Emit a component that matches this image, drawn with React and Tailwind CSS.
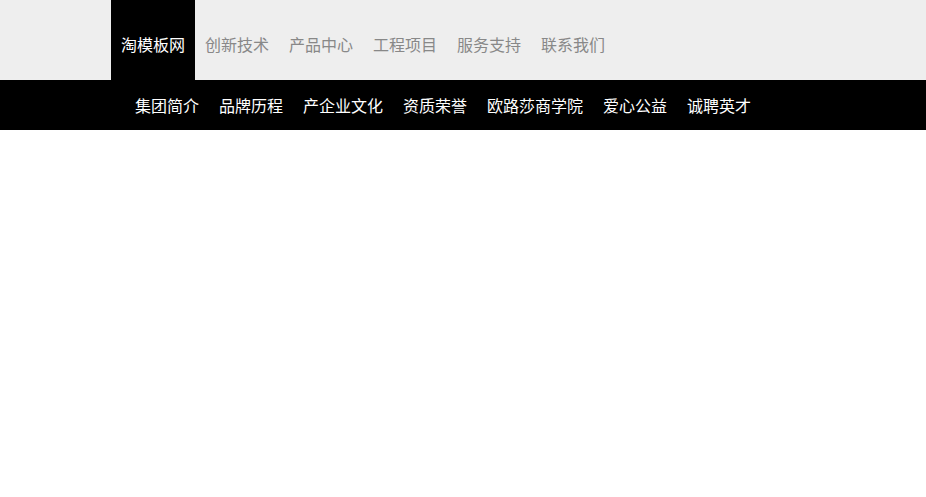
import React from "react";

const mainNav = ["淘模板网", "创新技术", "产品中心", "工程项目", "服务支持", "联系我们"];
const subNav = ["集团简介", "品牌历程", "产企业文化", "资质荣誉", "欧路莎商学院", "爱心公益", "诚聘英才"];

export default function App() {
  return (
    <div
      className="min-h-[497px] bg-white"
      style={{ fontFamily: '"Noto Sans CJK SC", "Noto Sans", sans-serif' }}
    >
      {/* main nav */}
      <div className="h-[80px] bg-[#eeeeee]">
        <ul className="flex h-full pl-[111px]">
          {mainNav.map((item, i) => (
            <li
              key={item}
              className={`flex h-full w-[84px] items-end justify-center pb-[26px] text-[16px] leading-[20px] ${
                i === 0 ? "bg-black text-white" : "text-[#888888]"
              }`}
            >
              {item}
            </li>
          ))}
        </ul>
      </div>

      {/* sub nav */}
      <div className="h-[50px] bg-black">
        <ul className="flex h-full items-center gap-[20px] pl-[135px]">
          {subNav.map((item) => (
            <li key={item} className="text-[16px] leading-[20px] text-white">
              {item}
            </li>
          ))}
        </ul>
      </div>
    </div>
  );
}
